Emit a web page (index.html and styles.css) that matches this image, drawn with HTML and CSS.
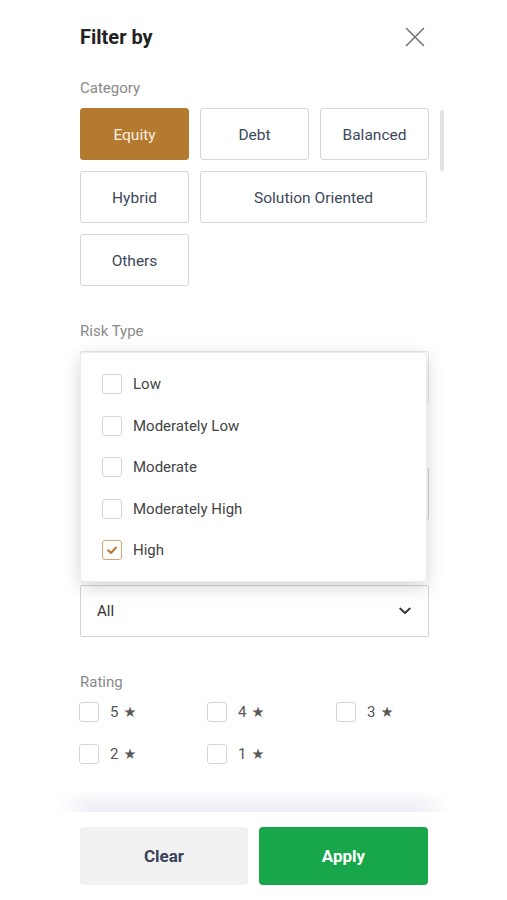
FILE: index.html
```html
<!DOCTYPE html>
<html lang="en">
<head>
<meta charset="utf-8">
<title>Filter by</title>
<link rel="stylesheet" href="styles.css">
</head>
<body>
<div class="panel">
  <div class="content">
    <header class="header">
      <h1 class="title">Filter by</h1>
      <button class="close" aria-label="Close">
        <svg width="20" height="20" viewBox="0 0 20 20"><path d="M1.5 1.5 L18.5 18.5 M18.5 1.5 L1.5 18.5" stroke="#747474" stroke-width="1.6" fill="none" stroke-linecap="round"/></svg>
      </button>
    </header>

    <section class="section section-first">
      <div class="label">Category</div>
      <div class="cat-wrap">
        <div class="cat-grid">
          <div class="chip chip-active">Equity</div>
          <div class="chip">Debt</div>
          <div class="chip">Balanced</div>
          <div class="chip">Hybrid</div>
          <div class="chip chip-wide">Solution Oriented</div>
          <div class="chip">Others</div>
        </div>
        <div class="scroll-track"><div class="scroll-thumb"></div></div>
      </div>
    </section>

    <section class="section section-risk">
      <div class="label">Risk Type</div>
      <div class="select select-under"></div>
      <div class="popup">
        <div class="opt"><span class="box"></span>Low</div>
        <div class="opt"><span class="box"></span>Moderately Low</div>
        <div class="opt"><span class="box"></span>Moderate</div>
        <div class="opt"><span class="box"></span>Moderately High</div>
        <div class="opt"><span class="box box-checked"><svg width="14" height="14" viewBox="0 0 14 14"><path d="M3 7.2 L6 10 L11 4.5" stroke="#b5782e" stroke-width="2" fill="none" stroke-linecap="round" stroke-linejoin="round"/></svg></span>High</div>
      </div>
    </section>

    <section class="section">
      <div class="label">&nbsp;</div>
      <div class="select"></div>
    </section>

    <section class="section">
      <div class="label">&nbsp;</div>
      <div class="select">
        <span class="select-text">All</span>
        <svg class="chev" width="12" height="8" viewBox="0 0 12 8"><path d="M1.2 1.5 L6 6 L10.8 1.5" stroke="#333" stroke-width="1.8" fill="none" stroke-linecap="round" stroke-linejoin="round"/></svg>
      </div>
    </section>

    <section class="section">
      <div class="label">Rating</div>
      <div class="rating-grid">
        <div class="rate"><span class="box"></span>5<span class="star">★</span></div>
        <div class="rate"><span class="box"></span>4<span class="star">★</span></div>
        <div class="rate"><span class="box"></span>3<span class="star">★</span></div>
        <div class="rate"><span class="box"></span>2<span class="star">★</span></div>
        <div class="rate"><span class="box"></span>1<span class="star">★</span></div>
      </div>
    </section>
  </div>

  <div class="fade"></div>
  <footer class="footer">
    <button class="btn btn-clear">Clear</button>
    <button class="btn btn-apply">Apply</button>
  </footer>
</div>
</body>
</html>
```

FILE: styles.css
```css
* { box-sizing: border-box; }

html, body {
  margin: 0;
  padding: 0;
  background: #ffffff;
}

body {
  font-family: Roboto, "Liberation Sans", Arial, sans-serif;
  color: #333;
}

.panel {
  width: 393px;
  height: 900px;
  margin: 0 auto;
  display: flex;
  flex-direction: column;
}

.content {
  padding: 0 21px 0 23px;
  flex: 1;
}

.header {
  height: 74px;
  display: flex;
  align-items: center;
  justify-content: space-between;
  width: 349px;
}

.title {
  margin: 0;
  font-size: 20px;
  font-weight: 700;
  color: #222;
  line-height: 24px;
}

.close {
  border: 0;
  background: none;
  padding: 0;
  margin-right: 4px;
  width: 20px;
  height: 20px;
  display: block;
}

.close svg { display: block; }

.section {
  margin-top: 35px;
  position: relative;
  width: 349px;
}

.section-first { margin-top: 4px; }

.label {
  font-size: 15px;
  line-height: 20px;
  height: 20px;
  color: #8a8a8a;
  margin-bottom: 10px;
}

.cat-wrap {
  display: flex;
  width: 370px;
}

.cat-grid {
  display: grid;
  grid-template-columns: repeat(3, 109px);
  grid-auto-rows: 52px;
  gap: 11px;
  width: 349px;
  flex: none;
}

.chip {
  border: 1px solid #d7d7d7;
  border-radius: 3px;
  display: flex;
  align-items: center;
  justify-content: center;
  padding-top: 2px;
  font-size: 15.5px;
  font-weight: 400;
  color: #3d485b;
  background: #fff;
}

.chip-wide {
  grid-column: span 2;
  margin-right: 2px;
}

.chip-active {
  background: #b47a30;
  border-color: #b47a30;
  color: #fbf0e2;
}

.scroll-track {
  margin-left: 11px;
  width: 4px;
  padding-top: 2px;
}

.scroll-thumb {
  width: 4px;
  height: 61px;
  border-radius: 2px;
  background: #e2e2e2;
}

.select {
  height: 52px;
  border: 1px solid #d3d3d3;
  border-radius: 2px;
  display: flex;
  align-items: center;
  justify-content: space-between;
  padding: 0 17px 0 16px;
}

.select-under {
  border-color: #e6e6e6;
}

.select-text {
  font-size: 15px;
  color: #333;
}

.chev { display: block; }

.popup {
  position: absolute;
  top: 31px;
  left: 0;
  width: 347px;
  height: 230px;
  background: #fff;
  border: 1px solid #ececec;
  border-radius: 4px;
  box-shadow: 0 5px 18px rgba(0, 0, 0, 0.17);
  padding: 10.5px 0 10.5px 21px;
  z-index: 2;
}

.opt {
  height: 41.5px;
  display: flex;
  align-items: center;
  font-size: 15px;
  color: #444;
}

.box {
  width: 20px;
  height: 20px;
  border: 1.5px solid #d6d6d6;
  border-radius: 3px;
  margin-right: 11px;
  flex: none;
  display: flex;
  align-items: center;
  justify-content: center;
  background: #fff;
}

.box-checked {
  border-color: #d2aa78;
}

.rating-grid {
  display: grid;
  grid-template-columns: 128px 129px 92px;
  grid-auto-rows: 20px;
  row-gap: 22px;
  margin-top: 1px;
  margin-left: -1px;
}

.rate {
  display: flex;
  align-items: center;
  font-size: 15px;
  color: #555;
}

.star {
  font-size: 14.5px;
  margin-left: 5px;
  color: #585858;
  font-family: "DejaVu Sans", sans-serif;
}

.fade {
  height: 22px;
  background: linear-gradient(180deg, rgba(242, 243, 248, 0) 0%, rgba(240, 241, 247, 0.75) 50%, #eef0f6 100%);
  -webkit-mask-image: linear-gradient(90deg, transparent 0%, #000 8%, #000 92%, transparent 100%);
  mask-image: linear-gradient(90deg, transparent 0%, #000 8%, #000 92%, transparent 100%);
  flex: none;
}

.footer {
  display: flex;
  gap: 11px;
  padding: 15px 22px 15px 23px;
  flex: none;
}

.btn {
  height: 58px;
  border: 0;
  border-radius: 4px;
  font-family: Roboto, "Liberation Sans", Arial, sans-serif;
  font-size: 17px;
  font-weight: 700;
  padding: 0;
}

.btn-clear {
  width: 168px;
  background: #f1f1f1;
  color: #39425a;
}

.btn-apply {
  width: 169px;
  background: #17a74a;
  color: #ffffff;
}
```
